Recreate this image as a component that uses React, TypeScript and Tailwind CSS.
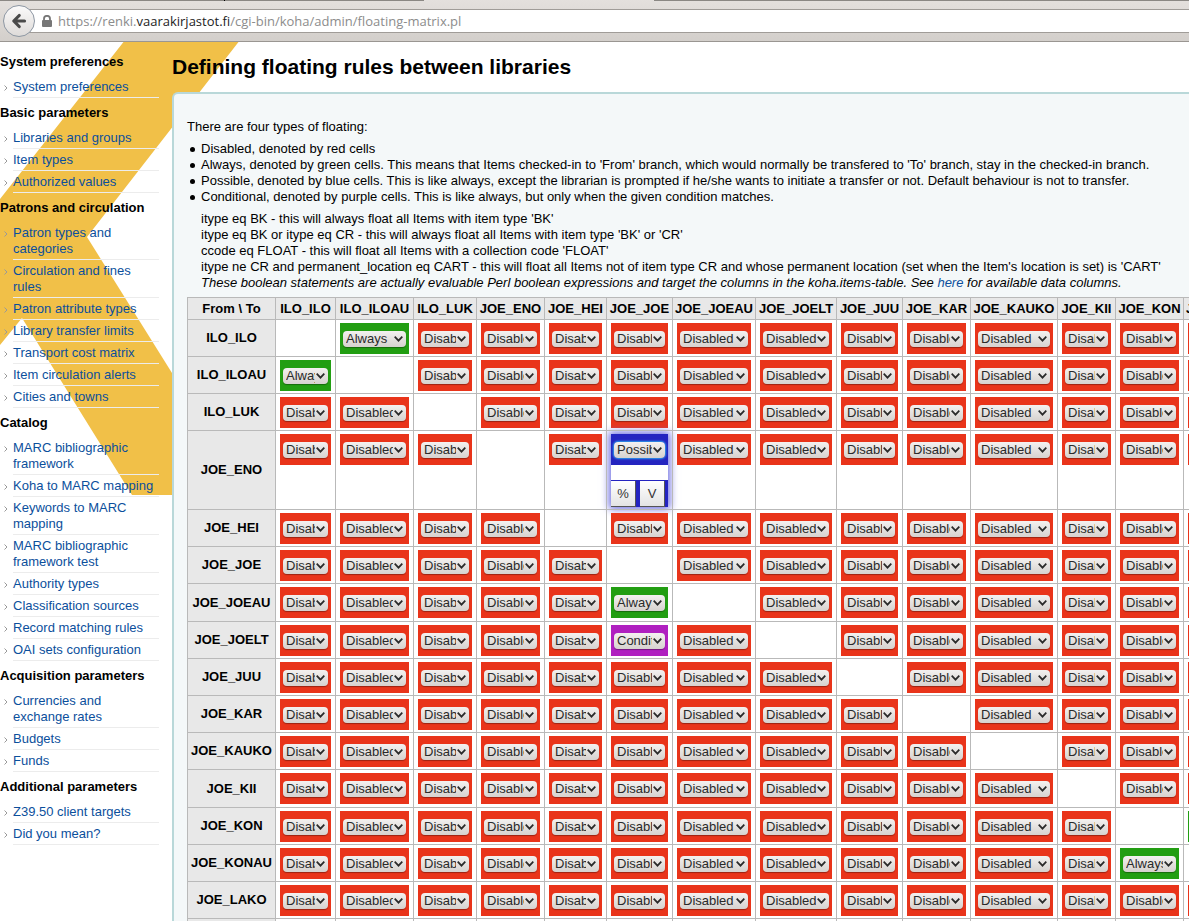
import React, { useState } from 'react';

type Rule = 'Disabled' | 'Always' | 'Possible' | 'Conditional';

interface MenuSection {
  title: string;
  items: string[];
}

const MENU: MenuSection[] = [
  { title: 'System preferences', items: ['System preferences'] },
  { title: 'Basic parameters', items: ['Libraries and groups', 'Item types', 'Authorized values'] },
  {
    title: 'Patrons and circulation',
    items: [
      'Patron types and categories',
      'Circulation and fines rules',
      'Patron attribute types',
      'Library transfer limits',
      'Transport cost matrix',
      'Item circulation alerts',
      'Cities and towns',
    ],
  },
  {
    title: 'Catalog',
    items: [
      'MARC bibliographic framework',
      'Koha to MARC mapping',
      'Keywords to MARC mapping',
      'MARC bibliographic framework test',
      'Authority types',
      'Classification sources',
      'Record matching rules',
      'OAI sets configuration',
    ],
  },
  { title: 'Acquisition parameters', items: ['Currencies and exchange rates', 'Budgets', 'Funds'] },
  { title: 'Additional parameters', items: ['Z39.50 client targets', 'Did you mean?'] },
];

const RULE_NOTES = [
  'Disabled, denoted by red cells',
  "Always, denoted by green cells. This means that Items checked-in to 'From' branch, which would normally be transfered to 'To' branch, stay in the checked-in branch.",
  'Possible, denoted by blue cells. This is like always, except the librarian is prompted if he/she wants to initiate a transfer or not. Default behaviour is not to transfer.',
  'Conditional, denoted by purple cells. This is like always, but only when the given condition matches.',
];

const COLUMNS = [
  { code: 'ILO_ILO', width: 'w-[60px]' },
  { code: 'ILO_ILOAU', width: 'w-[78px]' },
  { code: 'ILO_LUK', width: 'w-[63px]' },
  { code: 'JOE_ENO', width: 'w-[68px]' },
  { code: 'JOE_HEI', width: 'w-[62px]' },
  { code: 'JOE_JOE', width: 'w-[66px]' },
  { code: 'JOE_JOEAU', width: 'w-[83px]' },
  { code: 'JOE_JOELT', width: 'w-[81px]' },
  { code: 'JOE_JUU', width: 'w-[66px]' },
  { code: 'JOE_KAR', width: 'w-[68px]' },
  { code: 'JOE_KAUKO', width: 'w-[87px]' },
  { code: 'JOE_KII', width: 'w-[58px]' },
  { code: 'JOE_KON', width: 'w-[68px]' },
  { code: 'JOE_KONAU', width: 'w-[86px]' },
];

const ROWS = [...COLUMNS.map((c) => c.code), 'JOE_LAKO', 'JOE_LIP'];

// every pair that is not listed here is disabled
const INITIAL_RULES: Record<string, Rule> = {
  'ILO_ILO>ILO_ILOAU': 'Always',
  'ILO_ILOAU>ILO_ILO': 'Always',
  'JOE_ENO>JOE_JOE': 'Possible',
  'JOE_JOEAU>JOE_JOE': 'Always',
  'JOE_JOELT>JOE_JOE': 'Conditional',
  'JOE_KON>JOE_KONAU': 'Always',
  'JOE_KONAU>JOE_KON': 'Always',
};

const RULE_COLORS: Record<Rule, string> = {
  Disabled: 'bg-[#e9341a]',
  Always: 'bg-[#229e12]',
  Possible: 'bg-[#2424c0]',
  Conditional: 'bg-[#b020c0]',
};

const BrowserBar: React.FC = () => (
  <div className="relative flex h-[42px] items-center border-b border-[#9a9692] bg-linear-to-b from-[#e4e0dd] to-[#d3cfcb]">
    {/* lower edge of the tab strip, open under the active tab */}
    <div className="absolute inset-x-0 top-0 flex h-px">
      <div className="w-56 bg-[#8b8884]" />
      <div className="w-px bg-black" />
      <div className="w-[199px] bg-[#8b8884]" />
      <div className="w-[230px]" />
      <div className="flex-1 bg-[#8b8884]" />
    </div>
    <button
      type="button"
      aria-label="Back"
      className="z-10 ml-[3px] flex size-8 shrink-0 items-center justify-center rounded-full border border-[#8d97a3] bg-linear-to-b from-[#fbfafa] to-[#dedbd9]"
    >
      <svg viewBox="0 0 16 16" className="size-4">
        <path
          d="M8.2 2.500 2.800 8l5.400 5.500M3.500 8H13.500"
          fill="none"
          stroke="#4a4a4a"
          strokeWidth="3.200"
          strokeLinecap="round"
          strokeLinejoin="round"
        />
      </svg>
    </button>
    <div className="-ml-4 flex h-6 flex-1 items-center border-y border-[#a09c98] bg-white pl-[23px]">
      <svg viewBox="0 0 10 12" className="h-3 w-2.5 shrink-0">
        <path d="M2 6V3.800a3 3 0 0 1 6 0V6" fill="none" stroke="#777" strokeWidth="1.800" />
        <rect x="0" y="5" width="10" height="7" rx="1" fill="#777" />
      </svg>
      <input
        type="text"
        aria-label="Address"
        className="sr-only"
        readOnly
        value="https://renki.vaarakirjastot.fi/cgi-bin/koha/admin/floating-matrix.pl"
      />
      <span className="ml-1.5 font-['Open_Sans',sans-serif] text-[13px] whitespace-nowrap text-[#8c8c8c]">
        https://renki.<span className="text-[#1c1c1c]">vaarakirjastot.fi</span>/cgi-bin/koha/admin/floating-matrix.pl
      </span>
    </div>
  </div>
);

const Sidebar: React.FC = () => (
  <nav className="relative w-[172px] shrink-0 pt-3">
    {MENU.map((section) => (
      <section key={section.title} className="mb-[7px]">
        <h2 className="mb-1.5 font-bold whitespace-nowrap">{section.title}</h2>
        <ul className="mr-[13px] ml-[13px]">
          {section.items.map((item) => (
            <li key={item} className="relative border-b border-[#ececec] pt-[3px] pb-0.5">
              <svg viewBox="0 0 4 6" className="absolute top-[9px] -left-[9px] h-1.5 w-1">
                <path d="M.5.5 3 3 .5 5.500" fill="none" stroke="#999" />
              </svg>
              <a href="#" className="block text-[#0b4f9c]">
                {item}
              </a>
            </li>
          ))}
        </ul>
      </section>
    ))}
  </nav>
);

interface RuleCellProps {
  from: string;
  to: string;
  rule: Rule;
  onChange: (rule: Rule) => void;
}

const RuleCell: React.FC<RuleCellProps> = ({ from, to, rule, onChange }) => {
  const prompted = rule === 'Possible';

  return (
    <div className={`${RULE_COLORS[rule]} ${prompted ? 'shadow-[0_0_8px_2px_#6a6ae0]' : ''}`}>
      <div className="relative px-[3px] pt-2 pb-[7px]">
        <select
          aria-label={`${from} to ${to}`}
          value={rule}
          onChange={(e) => onChange(e.target.value as Rule)}
          className={`block h-4 w-full appearance-none rounded bg-linear-to-b from-[#f3f1f0] to-[#d6d2cf] pr-[13px] pl-[3px] leading-4 text-[#2a2a2a] ${
            prompted ? 'shadow-[0_0_2px_1px_#2fa0ec]' : 'shadow-[0_1px_1px_#00000055]'
          }`}
        >
          <option>Disabled</option>
          <option>Always</option>
          <option>Possible</option>
          <option>Conditional</option>
        </select>
        <svg viewBox="0 0 9 6" className="pointer-events-none absolute top-[13px] right-1.5 h-1.5 w-[9px]">
          <path d="M.7.7 4.500 4.700 8.300.7" fill="none" stroke="#2a2a2a" strokeWidth="1.700" />
        </svg>
      </div>
      {prompted && (
        <>
          <input type="text" aria-label="Condition" className="block h-[15px] w-full bg-white" />
          <div className="flex gap-1 pt-px pr-[3px]">
            <button
              type="button"
              className="h-[26px] flex-1 border-r border-b border-[#555] bg-linear-to-b from-white to-[#e4e4e4] text-[#333]"
            >
              %
            </button>
            <button
              type="button"
              className="h-[26px] flex-1 border-r border-b border-[#555] bg-linear-to-b from-white to-[#e4e4e4] text-[#333]"
            >
              V
            </button>
          </div>
        </>
      )}
    </div>
  );
};

const FloatingMatrix: React.FC = () => {
  const [rules, setRules] = useState(INITIAL_RULES);

  return (
    <table className="w-[1083px] table-fixed border-collapse bg-white">
      <colgroup>
        <col className="w-[88px]" />
        {COLUMNS.map((c) => (
          <col key={c.code} className={c.width} />
        ))}
      </colgroup>
      <thead>
        <tr className="h-[22px] bg-[#e8e8e8]">
          <th className="border border-[#b9b9b9] p-0 whitespace-nowrap">From \ To</th>
          {COLUMNS.map((c) => (
            <th key={c.code} className="border border-[#b9b9b9] p-0 whitespace-nowrap">
              {c.code}
            </th>
          ))}
        </tr>
      </thead>
      <tbody>
        {ROWS.map((from) => (
          <tr key={from} className="h-[37px] [&:nth-child(5n+7)]:h-[38px]">
            <th className="border border-[#b9b9b9] bg-[#e8e8e8] p-0 whitespace-nowrap">{from}</th>
            {COLUMNS.map(({ code: to }) => (
              <td key={to} className="border border-[#b9b9b9] px-1 pt-[3px] pb-0.5 align-top">
                {from !== to && (
                  <RuleCell
                    from={from}
                    to={to}
                    rule={rules[`${from}>${to}`] ?? 'Disabled'}
                    onChange={(rule) => setRules({ ...rules, [`${from}>${to}`]: rule })}
                  />
                )}
              </td>
            ))}
          </tr>
        ))}
      </tbody>
    </table>
  );
};

const App: React.FC = () => (
  <div className="h-screen overflow-hidden bg-white font-['Liberation_Sans',Arial,sans-serif] text-[13px] leading-4 text-black">
    <BrowserBar />
    <div className="relative flex">
      <svg viewBox="0 0 240 453" className="absolute top-0 left-0 h-[453px] w-60">
        <path d="M123.500 0H238.500L87 195 172 331V453H132L22 276 0 303V157Z" fill="#f1c048" />
      </svg>
      <Sidebar />
      <main className="relative min-w-0 flex-1">
        <h1 className="pt-3 pb-3 text-[21px] leading-[26px] font-bold whitespace-nowrap">
          Defining floating rules between libraries
        </h1>
        <div className="rounded-tl-md border-t-2 border-l-2 border-[#b9d8d9] bg-[#f4f8f9] pt-[25px] pl-[13px] whitespace-nowrap">
          <p>There are four types of floating:</p>
          <ul className="mt-1.5 ml-3.5">
            {RULE_NOTES.map((note) => (
              <li
                key={note}
                className="relative before:absolute before:top-1.5 before:-left-[11px] before:size-[5px] before:rounded-full before:bg-black before:content-['']"
              >
                {note}
              </li>
            ))}
          </ul>
          <div className="my-1.5 ml-3.5">
            <p>itype eq BK - this will always float all Items with item type 'BK'</p>
            <p>itype eq BK or itype eq CR - this will always float all Items with item type 'BK' or 'CR'</p>
            <p>ccode eq FLOAT - this will float all Items with a collection code 'FLOAT'</p>
            <p>
              itype ne CR and permanent_location eq CART - this will float all Items not of item type CR and whose
              permanent location (set when the Item's location is set) is 'CART'
            </p>
            <p className="italic">
              These boolean statements are actually evaluable Perl boolean expressions and target the columns in the
              koha.items-table. See{' '}
              <a href="#" className="text-[#0b4f9c]">
                here
              </a>{' '}
              for available data columns.
            </p>
          </div>
          <FloatingMatrix />
        </div>
      </main>
    </div>
  </div>
);

export default App;
